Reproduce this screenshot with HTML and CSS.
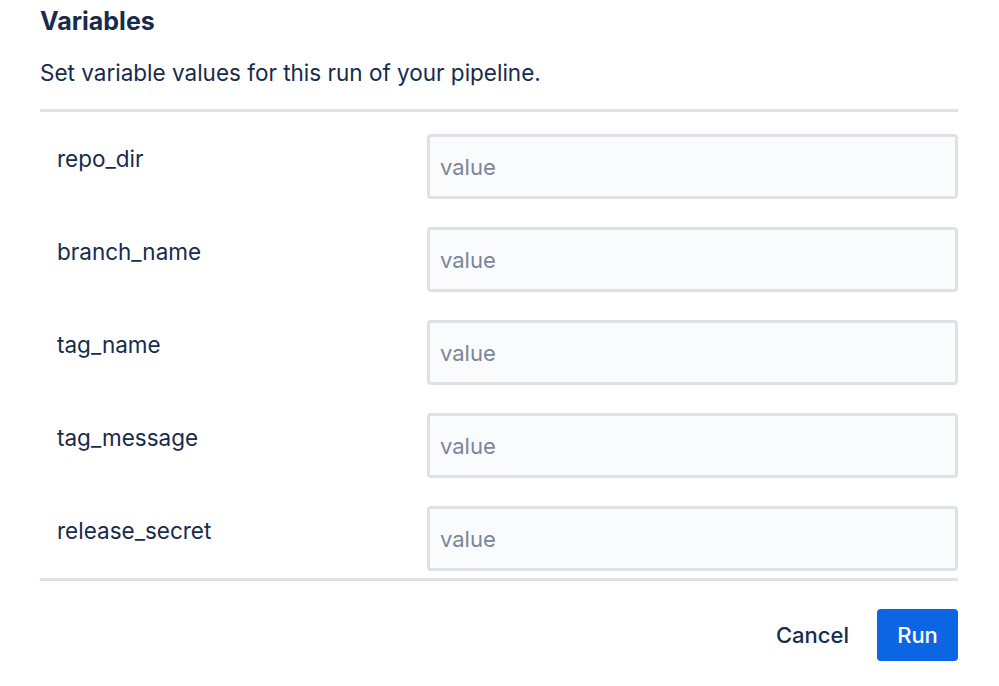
FILE: index.html
```html
<!DOCTYPE html>
<html lang="en">
<head>
    <meta charset="UTF-8">
    <meta name="viewport" content="width=device-width, initial-scale=1.0">
    <title>Run pipeline</title>
    <link rel="stylesheet" href="styles.css">
</head>
<body>
    <div class="dialog">
        <h2 class="title">Variables</h2>
        <p class="subtitle">Set variable values for this run of your pipeline.</p>
        <div class="var-list">
            <div class="var-row">
                <label class="var-name">repo_dir</label>
                <input class="var-input" type="text" placeholder="value">
            </div>
            <div class="var-row">
                <label class="var-name">branch_name</label>
                <input class="var-input" type="text" placeholder="value">
            </div>
            <div class="var-row">
                <label class="var-name">tag_name</label>
                <input class="var-input" type="text" placeholder="value">
            </div>
            <div class="var-row">
                <label class="var-name">tag_message</label>
                <input class="var-input" type="text" placeholder="value">
            </div>
            <div class="var-row">
                <label class="var-name">release_secret</label>
                <input class="var-input" type="text" placeholder="value">
            </div>
        </div>
        <div class="actions">
            <button class="btn btn-subtle">Cancel</button>
            <button class="btn btn-primary">Run</button>
        </div>
    </div>
</body>
</html>
```

FILE: styles.css
```css
* {
    padding: 0;
    margin: 0;
    box-sizing: border-box;
    font-family: Inter, "Noto Sans", sans-serif;
}

body {
    background: #ffffff;
    color: #172b4d;
}

.dialog {
    width: 918px;
    margin-left: 40px;
    padding-top: 5px;
}

.title {
    font-size: 25px;
    font-weight: 700;
    line-height: 32px;
}

.subtitle {
    font-size: 22.5px;
    line-height: 28px;
    margin-top: 22px;
}

.var-list {
    margin-top: 22px;
    border-top: 3px solid #dfe1e6;
    border-bottom: 3px solid #dfe1e6;
    padding: 22px 0 7px;
    display: flex;
    flex-direction: column;
    gap: 28px;
}

.var-row {
    display: flex;
    align-items: flex-start;
}

.var-name {
    width: 387px;
    padding-left: 17px;
    padding-top: 11px;
    font-size: 22.5px;
    line-height: 28px;
}

.var-input {
    flex: 1;
    height: 65px;
    border: 3px solid #dfe1e6;
    border-radius: 4px;
    background: #fafbfc;
    padding: 0 10px;
    font-size: 22px;
    color: #172b4d;
    outline: none;
}

.var-input::placeholder {
    color: #7a869a;
}

.actions {
    display: flex;
    justify-content: flex-end;
    gap: 8px;
    margin-top: 28px;
}

.btn {
    height: 52px;
    border: none;
    border-radius: 4px;
    font-size: 22px;
    font-weight: 500;
    padding: 0 20px;
    cursor: pointer;
}

.btn-subtle {
    background: transparent;
    color: #172b4d;
}

.btn-primary {
    background: #0c66e4;
    color: #ffffff;
    width: 81px;
}
```
